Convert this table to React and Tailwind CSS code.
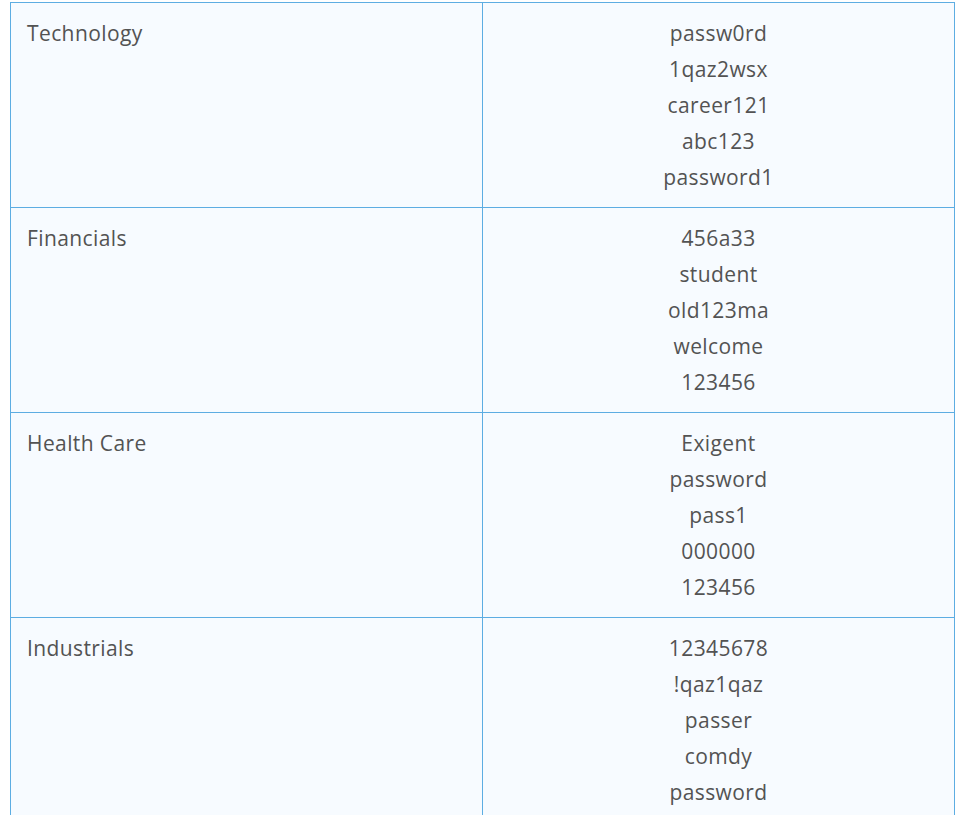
import React from "react";

const rows = [
  { sector: "Technology", passwords: ["passw0rd", "1qaz2wsx", "career121", "abc123", "password1"] },
  { sector: "Financials", passwords: ["456a33", "student", "old123ma", "welcome", "123456"] },
  { sector: "Health Care", passwords: ["Exigent", "password", "pass1", "000000", "123456"] },
  { sector: "Industrials", passwords: ["12345678", "!qaz1qaz", "passer", "comdy", "password"] },
];

export default function App() {
  return (
    <div className="min-h-screen bg-white pl-[10px] pt-[2px]" style={{ fontFamily: "'Open Sans', sans-serif" }}>
      <table className="w-[945px] border-collapse bg-[#f7fbff] text-[21px] leading-[36px] tracking-[0.4px] text-[#535353]">
        <tbody>
          {rows.map((row) => (
            <tr key={row.sector}>
              <td className="w-1/2 border border-[#5dade2] px-4 py-3 align-top">{row.sector}</td>
              <td className="w-1/2 border border-[#5dade2] px-4 py-3 text-center align-top">
                {row.passwords.map((p, i) => (
                  <div key={i}>{p}</div>
                ))}
              </td>
            </tr>
          ))}
        </tbody>
      </table>
    </div>
  );
}
